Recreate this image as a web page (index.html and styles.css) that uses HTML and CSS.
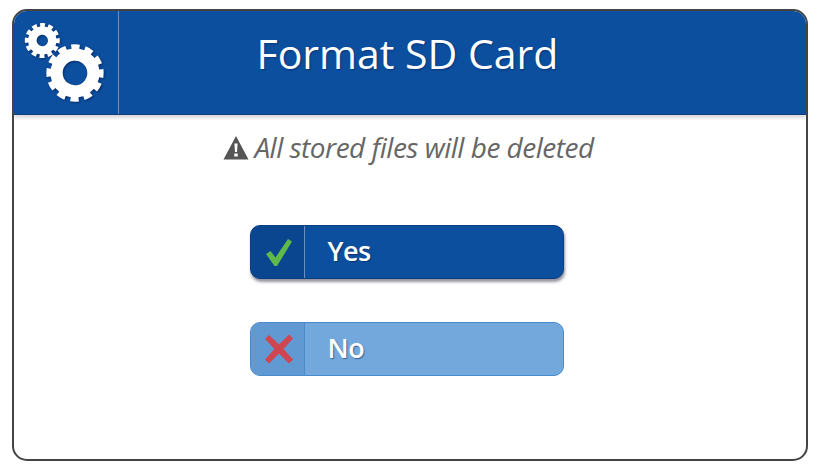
FILE: index.html
```html
<!DOCTYPE html>
<html lang="en">
<head>
<meta charset="utf-8">
<title>Format SD Card</title>
<link rel="stylesheet" href="styles.css">
</head>
<body>
<main class="frame">
  <header class="header">
    <div class="gears">
      <svg class="gear-icon" width="104" height="103" viewBox="0 0 104 103">
        <g class="gear-small" transform="translate(28.300 29.500) rotate(-8)">
          <circle class="gear-teeth" r="15.300" pathLength="24"/>
          <circle class="gear-body" r="9.950"/>
        </g>
        <g class="gear-big" transform="translate(61 62) rotate(-8)">
          <circle class="gear-teeth" r="26" pathLength="24"/>
          <circle class="gear-body" r="18.400"/>
        </g>
      </svg>
    </div>
    <h1 class="title">Format SD Card</h1>
  </header>
  <div class="content">
    <p class="warning">
      <svg class="warning-icon" width="26" height="25" viewBox="0 0 26 25">
        <path class="warning-tri" d="M13 1 L25.500 24.500 H0.500 Z M11.400 8.500 L12 17 H14 L14.600 8.500 Z M11.300 18.500 V21.500 H14.700 V18.500 Z"/>
      </svg>
      <span>All stored files will be deleted</span>
    </p>
    <div class="actions">
      <button class="btn btn-yes" type="button">
        <span class="btn-icon">
          <svg width="30" height="30" viewBox="0 0 30 30"><path class="check" d="M2 17 L6.500 14 L11.500 20.500 L24 2 L28 4.500 L13 29 L10.500 29 Z"/></svg>
        </span>
        <span class="btn-label">Yes</span>
      </button>
      <button class="btn btn-no" type="button">
        <span class="btn-icon">
          <svg width="30" height="30" viewBox="0 0 30 30"><path class="cross" d="M1 5 L5 1 L15 10.500 L25 0.500 L29 4.500 L19.500 15 L29 25.500 L25 29.500 L15 19.500 L5 29.500 L1 25.500 L10.500 15 Z"/></svg>
        </span>
        <span class="btn-label">No</span>
      </button>
    </div>
  </div>
</main>
</body>
</html>
```
FILE: styles.css
```css
* { box-sizing: border-box; }
html, body { margin: 0; padding: 0; background: #fff; }
body { width: 820px; height: 472px; padding: 9px 12px 0; font-family: "Open Sans", "Noto Sans", sans-serif; overflow: hidden; }
.frame { width: 796px; height: 452px; border: 2px solid #444; border-radius: 15px; overflow: hidden; background: #fff; display: flex; flex-direction: column; }
.header { height: 104px; flex: none; background: #0c4f9e; display: flex; border-bottom: 1px solid #123f7c; box-shadow: 0 3px 3px #dcdcdc; }
.gears { width: 105px; flex: none; border-right: 1px solid #6f90bb; }
.gear-icon { display: block; filter: blur(.5px) drop-shadow(1px 1px 1px rgba(0,20,70,.6)); }
.gear-teeth { fill: none; stroke: #fff; stroke-dasharray: 1.200 .8; }
.gear-body { fill: none; stroke: #fff; }
.gear-small .gear-teeth { stroke-width: 4.400; }
.gear-small .gear-body { stroke-width: 8.500; }
.gear-big .gear-teeth { stroke-width: 5.400; }
.gear-big .gear-body { stroke-width: 12.200; }
.title { flex: 1; margin: 0; padding: 15px 110px 0 0; text-align: center; font-size: 41px; line-height: 54px; font-weight: 500; color: #fff; letter-spacing: 0; text-shadow: 1px 1px 2px rgba(0,25,80,.45); }
.content { flex: 1; display: flex; flex-direction: column; align-items: center; }
.warning { display: flex; align-items: center; gap: 5px; margin: 14px 0 0; padding-right: 3px; height: 36px; color: #666; font-style: italic; font-weight: 500; font-size: 28px; letter-spacing: -.5px; }
.warning-icon { flex: none; }
.warning-tri { fill: #555; fill-rule: evenodd; }
.actions { display: flex; flex-direction: column; gap: 43px; margin: 60px 7px 0 0; }
.btn { width: 314px; height: 54px; padding: 0; display: flex; align-items: stretch; border-radius: 10px; font: inherit; text-align: left; }
.btn-yes { background: #0c4f9e; border: 1px solid #0b3f80; box-shadow: 1px 3px 3px rgba(60,60,80,.55); }
.btn-no { background: #72a8dc; border: 1px solid #4a8ac8; }
.btn-icon { width: 54px; flex: none; display: flex; align-items: center; justify-content: center; border-right: 1px solid; border-radius: 9px 0 0 9px; padding-left: 3px; }
.btn-yes .btn-icon { background: #0a4690; border-right-color: #6d8fbb; }
.btn-no .btn-icon { background: #6199d2; border-right-color: #4a8ac8; }
.btn-label { padding: 6px 0 0 23px; font-size: 27px; line-height: 38px; font-weight: 600; color: #fff; letter-spacing: -.5px; text-shadow: 1px 1px 1px rgba(0,30,80,.5); }
.check { fill: #5fb94a; }
.cross { fill: #cf4650; }
```
